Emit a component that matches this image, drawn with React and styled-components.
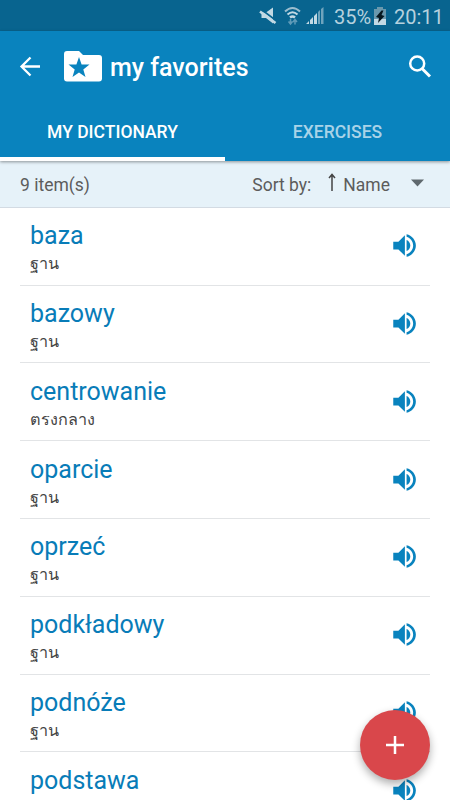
import React from 'react';
import styled, { createGlobalStyle } from 'styled-components';

//styles
const GlobalStyle = createGlobalStyle`
  * { box-sizing: border-box; }

  body {
    margin: 0;
    overflow: hidden;
    font-family: Roboto, "Noto Sans", sans-serif;
  }
`;

const Screen = styled.div`
  position: relative;
  display: flex;
  flex-direction: column;
  width: 450px;
  height: 800px;
  overflow: hidden;
  background: #fff;
`;

const StatusBar = styled.div`
  display: flex;
  align-items: center;
  justify-content: flex-end;
  flex: none;
  height: 31px;
  padding: 2px 9px 0 0;
  background: #08648f;
  color: #b5d1de;
`;

const StatusIcons = styled.svg`
  width: 68px;
  height: 22px;
  margin-right: 7px;
`;

const StatusText = styled.span`
  width: ${props => props.$width}px;
  font-size: 20px;
  line-height: 28px;
  white-space: nowrap;
`;

const Battery = styled.svg`
  width: 12px;
  height: 20px;
  margin: 0 8px 0 3px;
`;

const Header = styled.header`
  position: relative;
  z-index: 1;
  flex: none;
  height: 130px;
  background: #0983be;
  box-shadow: 0 1px 3px rgba(0, 0, 0, 0.4);
`;

const Toolbar = styled.div`
  display: flex;
  align-items: center;
  height: 71px;
  padding: 0 18px 0 19px;
`;

const BackIcon = styled.svg`
  width: 22px;
  height: 22px;
`;

const FolderIcon = styled.svg`
  width: 38px;
  height: 31px;
  margin-left: 22.5px;
`;

const Title = styled.h1`
  flex: 1;
  margin: 3px 0 0 8.5px;
  color: #fff;
  font-size: 25px;
  font-weight: 500;
  line-height: 30px;
`;

const SearchIcon = styled.svg`
  width: 24px;
  height: 24px;
`;

const Tabs = styled.nav`
  display: flex;
  height: 59px;
`;

const Tab = styled.div`
  flex: 1;
  padding-top: 18px;
  border-bottom: 4px solid ${props => (props.$active ? '#fff' : 'transparent')};
  color: ${props => (props.$active ? '#fff' : '#a9d3e8')};
  font-size: 17.5px;
  font-weight: 500;
  line-height: 24px;
  text-align: center;
`;

const SortBar = styled.div`
  display: flex;
  align-items: center;
  flex: none;
  height: 46.8px;
  padding: 2px 26px 0 20px;
  border-bottom: 1px solid #d3dbe3;
  background: #e6f2f9;
  color: #5c5c5c;
  font-size: 17.5px;
`;

const Count = styled.span`
  flex: 1;
`;

const SortArrow = styled.svg`
  width: 8px;
  height: 19px;
  margin: -4px 7px 0 17px;
`;

const Caret = styled.svg`
  width: 13px;
  height: 8px;
  margin: -3px 0 0 21px;
`;

const List = styled.div`
  padding: 0 20px;
`;

const Row = styled.div`
  display: flex;
  justify-content: space-between;
  height: 77.8px;
  padding: 11.5px 10px 0;
  border-bottom: 1px solid #e2e4e6;
`;

const Word = styled.div`
  color: #087cb8;
  font-size: 25px;
  line-height: 34px;
`;

const Translation = styled.div`
  color: #444;
  font-size: 16.2px;
  line-height: 22px;
`;

const SpeakerIcon = styled.svg`
  width: 31px;
  height: 31px;
  margin: 11px 0 0;
`;

const AddButton = styled.button`
  position: absolute;
  right: 20px;
  bottom: 20px;
  display: flex;
  align-items: center;
  justify-content: center;
  width: 70px;
  height: 70px;
  padding: 0;
  border: 0;
  border-radius: 50%;
  background: #d9474b;
  box-shadow: 0 4px 8px rgba(0, 0, 0, 0.32);
`;

const words = [
  { name: 'baza', translation: 'ฐาน' },
  { name: 'bazowy', translation: 'ฐาน' },
  { name: 'centrowanie', translation: 'ตรงกลาง' },
  { name: 'oparcie', translation: 'ฐาน' },
  { name: 'oprzeć', translation: 'ฐาน' },
  { name: 'podkładowy', translation: 'ฐาน' },
  { name: 'podnóże', translation: 'ฐาน' },
  { name: 'podstawa' }
];

const Status = () => (
  <StatusBar>
    <StatusIcons viewBox="0 0 68 22">
      {/* muted speaker */}
      <path d="M2.500 6.500H7l7-5v16l-7-5.500H2.500z" fill="#c2d9e4" />
      <path d="M3 4l14 10.500" stroke="#08648f" strokeWidth="1.600" />
      <path d="M1 5.500l15.500 11.500" stroke="#c2d9e4" strokeWidth="2.600" />
      {/* wifi */}
      <g fill="none" stroke="#c2d9e4" strokeWidth="2">
        <path d="M26 5.500q7.500-7 15 0" stroke="#9bbdce" />
        <path d="M28.500 8.500q5-4.500 10 0" />
        <path d="M31 11.500q2.500-2.200 5 0" strokeWidth="2.400" />
      </g>
      <path d="M31.500 13v5M29.500 15.500l2 2.500 2-2.500M36 18.500v-5M34 16l2-2.500 2 2.500" fill="none" stroke="#5f9bb8" strokeWidth="1.500" />
      {/* signal */}
      <path d="M47 18l3-3v3zM51 18v-4l3-3v7zM55 18v-8l3-3v11z" fill="#c2d9e4" />
      <path d="M59 18V6l2-2v14zM62 18V3l2.500-2v17z" fill="#6fa4bd" />
    </StatusIcons>
    <StatusText $width={37}>35%</StatusText>
    <Battery viewBox="0 0 12 20">
      <path d="M3 0h6v2h3v10H0V2h3z" fill="#6998ad" />
      <path d="M0 12h12v6H0z" fill="#c2d9e4" />
      <path d="M7.500 3.500L2 10l3 1-1 5 6.500-7-3-1 2-4.500z" fill="#06171f" />
    </Battery>
    <StatusText $width={47}>20:11</StatusText>
  </StatusBar>
);

const WordRow = props => (
  <Row>
    <div>
      <Word>{props.name}</Word>
      {props.translation && <Translation>{props.translation}</Translation>}
    </div>
    <SpeakerIcon viewBox="0 0 24 24" fill="#0983be">
      <path d="M3.300 9v6h4l5 5V4l-5 5h-4zm13.200 3c0-1.900-1.200-3.700-2.900-4.300v8.600c1.700-.600 2.900-2.400 2.900-4.300zM13.600 3.200v2.100c2.900.860 5.100 3.540 5.100 6.700s-2.200 5.850-5.100 6.700v2.100c4.100-.910 7.200-4.490 7.200-8.800s-3.100-7.900-7.200-8.800z" />
    </SpeakerIcon>
  </Row>
);

const App = () => {
  return (
    <Screen>
      <GlobalStyle />
      <Status />
      <Header>
        <Toolbar>
          <BackIcon viewBox="0 0 22 22" fill="none" stroke="#fff" strokeWidth="2.300">
            <path d="M21 10.500H3M11.500 1.500L2.500 10.500l9 9" />
          </BackIcon>
          <FolderIcon viewBox="0 0 38 31">
            <path d="M3 0h12l4 4h16a3 3 0 0 1 3 3v20.500a3 3 0 0 1-3 3H3a3 3 0 0 1-3-3V3a3 3 0 0 1 3-3z" fill="#fff" />
            <path d="M15 6l2.600 7.400 7.900.200-6.200 4.900 2.200 7.500-6.500-4.400L8.500 26l2.200-7.500-6.200-4.900 7.900-.200z" fill="#0983be" />
          </FolderIcon>
          <Title>my favorites</Title>
          <SearchIcon viewBox="0 0 24 24" fill="none" stroke="#fff">
            <circle cx="9.200" cy="8.500" r="7" strokeWidth="2.500" />
            <path d="M14 13.500l8 8" strokeWidth="3" />
          </SearchIcon>
        </Toolbar>
        <Tabs>
          <Tab $active>MY DICTIONARY</Tab>
          <Tab>EXERCISES</Tab>
        </Tabs>
      </Header>
      <SortBar>
        <Count>9 item(s)</Count>
        <span>Sort by:</span>
        <SortArrow viewBox="0 0 8 19" fill="none" stroke="#444" strokeWidth="1.500">
          <path d="M4 18V2M1 5l3-3.500L7 5" />
        </SortArrow>
        <span>Name</span>
        <Caret viewBox="0 0 13 8">
          <path d="M0 .500h13L6.500 7.500z" fill="#5f696e" />
        </Caret>
      </SortBar>
      <List>
        {words.map(word => (
          <WordRow key={word.name} name={word.name} translation={word.translation} />
        ))}
      </List>
      <AddButton aria-label="Add">
        <svg width="18" height="18" viewBox="0 0 18 18" stroke="#fff" strokeWidth="2.500">
          <path d="M9 0v18M0 9h18" />
        </svg>
      </AddButton>
    </Screen>
  );
};

export default App;
